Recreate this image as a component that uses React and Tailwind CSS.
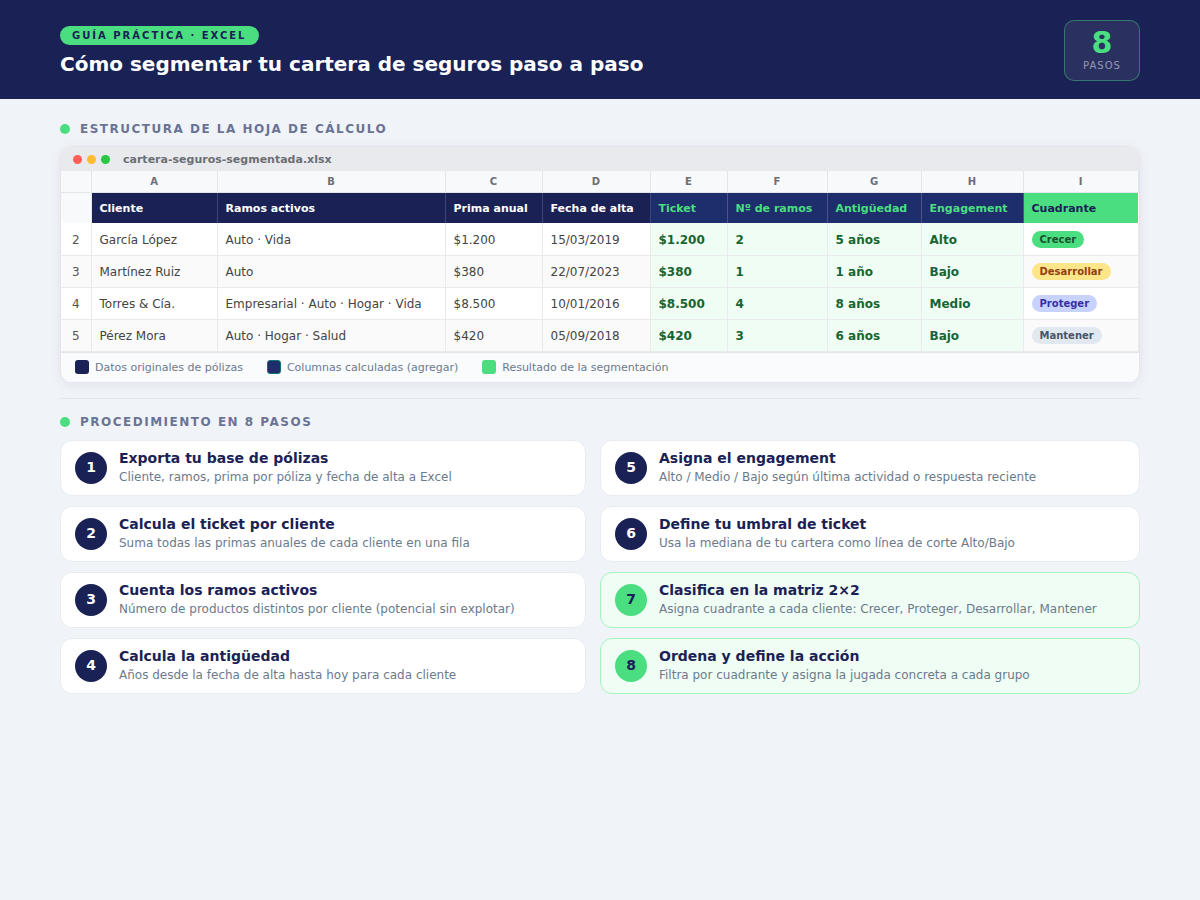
import * as React from "react"

const colLetters = ["A", "B", "C", "D", "E", "F", "G", "H", "I"]
const colWidths = ["w-[30px]", "w-[126px]", "w-[228px]", "w-[97px]", "w-[108px]", "w-[77px]", "w-[100px]", "w-[94px]", "w-[102px]", "w-[115px]"]

const rows = [
  { n: 2, cells: ["García López", "Auto · Vida", "$1.200", "15/03/2019"], calc: ["$1.200", "2", "5 años", "Alto"], tag: "Crecer", tagClass: "bg-[#4ade80] text-[#14532d]" },
  { n: 3, cells: ["Martínez Ruiz", "Auto", "$380", "22/07/2023"], calc: ["$380", "1", "1 año", "Bajo"], tag: "Desarrollar", tagClass: "bg-[#fde68a] text-[#92400e]" },
  { n: 4, cells: ["Torres & Cía.", "Empresarial · Auto · Hogar · Vida", "$8.500", "10/01/2016"], calc: ["$8.500", "4", "8 años", "Medio"], tag: "Proteger", tagClass: "bg-[#c7d2fe] text-[#3730a3]" },
  { n: 5, cells: ["Pérez Mora", "Auto · Hogar · Salud", "$420", "05/09/2018"], calc: ["$420", "3", "6 años", "Bajo"], tag: "Mantener", tagClass: "bg-[#e2e8f0] text-[#475569]" },
]

const leftSteps = [
  { n: 1, title: "Exporta tu base de pólizas", text: "Cliente, ramos, prima por póliza y fecha de alta a Excel" },
  { n: 2, title: "Calcula el ticket por cliente", text: "Suma todas las primas anuales de cada cliente en una fila" },
  { n: 3, title: "Cuenta los ramos activos", text: "Número de productos distintos por cliente (potencial sin explotar)" },
  { n: 4, title: "Calcula la antigüedad", text: "Años desde la fecha de alta hasta hoy para cada cliente" },
]

const rightSteps = [
  { n: 5, title: "Asigna el engagement", text: "Alto / Medio / Bajo según última actividad o respuesta reciente" },
  { n: 6, title: "Define tu umbral de ticket", text: "Usa la mediana de tu cartera como línea de corte Alto/Bajo" },
  { n: 7, title: "Clasifica en la matriz 2×2", text: "Asigna cuadrante a cada cliente: Crecer, Proteger, Desarrollar, Mantener", green: true },
  { n: 8, title: "Ordena y define la acción", text: "Filtra por cuadrante y asigna la jugada concreta a cada grupo", green: true },
]

function SectionLabel({ children, className }) {
  return (
    <div className={`flex items-center gap-[10px] ${className}`}>
      <span className="w-[10px] h-[10px] rounded-full bg-[#4ade80]" />
      <span className="text-[12px] leading-[16px] font-bold tracking-[1.5px] text-[#6b7394]">{children}</span>
    </div>
  )
}

function Step({ step }) {
  return (
    <div className={`flex items-center gap-3 h-[56px] px-[14px] rounded-[12px] border ${step.green ? "bg-[#f0fdf4] border-[#a7f3c0]" : "bg-white border-[#e8ecf2]"}`}>
      <div className={`w-8 h-8 shrink-0 rounded-full flex items-center justify-center text-[14px] font-bold ${step.green ? "bg-[#4ade80] text-[#1a2255]" : "bg-[#1a2255] text-white"}`}>
        {step.n}
      </div>
      <div className="pb-[2px]">
        <div className="text-[14px] leading-[18px] font-bold text-[#1a2255]">{step.title}</div>
        <div className="text-[12px] leading-[16px] mt-[2px] text-[#6b7a8d]">{step.text}</div>
      </div>
    </div>
  )
}

function LegendItem({ swatch, children }) {
  return (
    <div className="flex items-center gap-[6px]">
      <span className={`w-[14px] h-[14px] rounded-[3px] ${swatch}`} />
      <span className="pt-[2px]">{children}</span>
    </div>
  )
}

export default function App() {
  return (
    <div className="min-h-[900px] bg-[#f0f4f8] font-['DejaVu_Sans',sans-serif]">
      <header className="h-[99px] bg-[#1a2255] px-[60px] pt-[20px] flex items-start justify-between">
        <div className="pt-[6px]">
          <span className="block w-fit bg-[#4ade80] text-[#1a2255] text-[10px] leading-[13px] font-bold tracking-[2px] px-3 py-[3px] rounded-full">GUÍA PRÁCTICA · EXCEL</span>
          <h1 className="mt-[5px] text-[20px] leading-[28px] font-bold text-white">Cómo segmentar tu cartera de seguros paso a paso</h1>
        </div>
        <div className="w-[76px] h-[61px] rounded-[10px] border border-[#4ade80]/40 bg-white/[0.07] flex flex-col items-center justify-center">
          <div className="text-[30px] leading-[30px] font-bold text-[#4ade80]">8</div>
          <div className="mt-[1px] mb-[1px] text-[10px] leading-[13px] tracking-[1px] text-white/50">PASOS</div>
        </div>
      </header>

      <main className="px-[60px] pt-[22px]">
        <SectionLabel className="mb-[9px]">ESTRUCTURA DE LA HOJA DE CÁLCULO</SectionLabel>
        <div className="rounded-[12px] border border-[#e2e6ec] bg-white overflow-hidden shadow-[0_2px_12px_rgba(26,34,85,0.07)]">
          <div className="h-[24px] bg-[#e8eaed] flex items-center px-3 gap-[5px]">
            <span className="w-[9px] h-[9px] rounded-full bg-[#ff5f57]" />
            <span className="w-[9px] h-[9px] rounded-full bg-[#febc2e]" />
            <span className="w-[9px] h-[9px] rounded-full bg-[#28c840]" />
            <span className="ml-[8px] pt-[1px] text-[11px] leading-[16px] font-bold text-[#6b6f76]">cartera-seguros-segmentada.xlsx</span>
          </div>
          <table className="table-fixed border-collapse w-[1077px] text-[12px]">
            <colgroup>
              {colWidths.map((w, i) => <col key={i} className={w} />)}
            </colgroup>
            <thead>
              <tr className="h-[21px] bg-[#f8f9fa]">
                <th className="border-r border-b border-[#e2e6ec]" />
                {colLetters.map((l) => (
                  <th key={l} className="pt-[1px] border-r border-b border-[#e2e6ec] text-[10px] font-bold text-[#6b6f76] text-center">{l}</th>
                ))}
              </tr>
              <tr className="h-[31px] text-left text-[11px] font-bold">
                <th className="bg-[#f8f9fa] border-r border-[#e2e6ec]" />
                {["Cliente", "Ramos activos", "Prima anual", "Fecha de alta"].map((h) => (
                  <th key={h} className="px-2 pt-[2px] bg-[#1a2255] text-white border-r border-[#3d4578]">{h}</th>
                ))}
                {["Ticket", "Nº de ramos", "Antigüedad", "Engagement"].map((h) => (
                  <th key={h} className="px-2 pt-[2px] bg-[#1e2d6b] text-[#4ade80] border-r border-[#4a5488]">{h}</th>
                ))}
                <th className="px-2 pt-[2px] bg-[#4ade80] text-[#1a2255]">Cuadrante</th>
              </tr>
            </thead>
            <tbody>
              {rows.map((r, i) => (
                <tr key={r.n} className={`h-[32px] ${i % 2 ? "bg-[#fafafa]" : "bg-white"}`}>
                  <td className="pt-[2px] border-r border-b border-[#e8eaed] text-center text-[#555]">{r.n}</td>
                  {r.cells.map((c) => (
                    <td key={c} className="px-2 pt-[2px] border-r border-b border-[#e8eaed] text-[#444]">{c}</td>
                  ))}
                  {r.calc.map((c, j) => (
                    <td key={j} className="px-2 pt-[2px] border-r border-b border-[#e8eaed] bg-[#f0fdf4] font-bold text-[#166534]">{c}</td>
                  ))}
                  <td className="px-2 border-r border-b border-[#e8eaed]">
                    <span className={`inline-block rounded-full px-2 py-[2px] text-[10px] leading-[13px] font-bold ${r.tagClass}`}>{r.tag}</span>
                  </td>
                </tr>
              ))}
            </tbody>
          </table>
          <div className="h-[30px] border-t border-[#e2e6ec] bg-[#fafbfc] flex items-center px-[14px] gap-[24px] text-[11px] leading-[14px] text-[#6b7a8d]">
            <LegendItem swatch="bg-[#1a2255]">Datos originales de pólizas</LegendItem>
            <LegendItem swatch="bg-[#1e2d6b] border border-[#0f766e]">Columnas calculadas (agregar)</LegendItem>
            <LegendItem swatch="bg-[#4ade80]">Resultado de la segmentación</LegendItem>
          </div>
        </div>

        <hr className="mt-[15px] mb-[15px] border-0 border-t border-[#e2e6ec]" />

        <SectionLabel className="mb-[10px]">PROCEDIMIENTO EN 8 PASOS</SectionLabel>
        <div className="grid grid-cols-[526px_540px] gap-x-[14px]">
          <div className="flex flex-col gap-[10px]">
            {leftSteps.map((s) => <Step key={s.n} step={s} />)}
          </div>
          <div className="flex flex-col gap-[10px]">
            {rightSteps.map((s) => <Step key={s.n} step={s} />)}
          </div>
        </div>
      </main>
    </div>
  )
}
